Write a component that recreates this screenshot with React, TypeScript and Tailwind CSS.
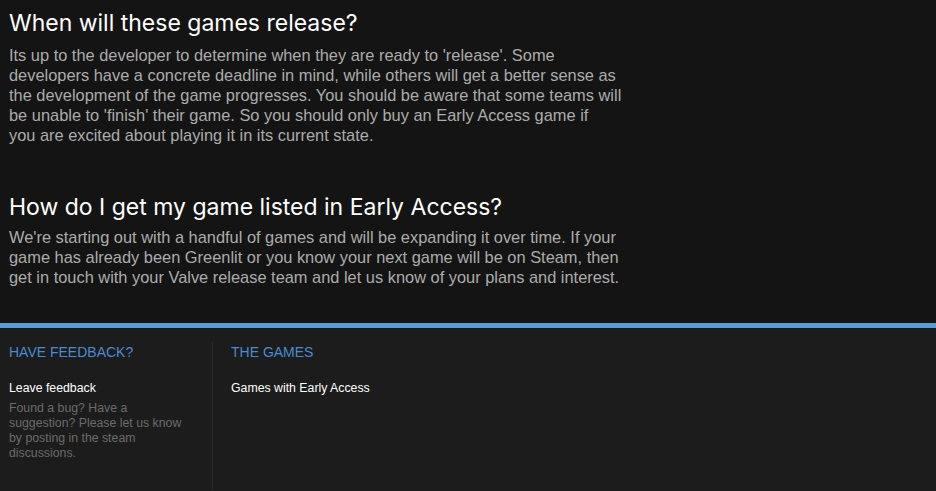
export default function App() {
  return (
    <div className="min-h-[491px] bg-[#1c1c1c] font-['Liberation_Sans',Arial,sans-serif]">
      <div className="bg-[#141414] px-[9px] pt-[8px] pb-[36px]">
        <div className="w-[614px]">
          <h2 className="font-['Inter',sans-serif] text-[23px] leading-[30px] text-white">
            When will these games release?
          </h2>
          <p className="mt-[7px] text-[16.4px] leading-[20px] text-[#acacac]">
            Its up to the developer to determine when they are ready to 'release'. Some developers have a concrete
            deadline in mind, while others will get a better sense as the development of the game progresses. You
            should be aware that some teams will be unable to 'finish' their game. So you should only buy an Early
            Access game if
            <br />
            you are excited about playing it in its current state.
          </p>
          <h2 className="mt-[47px] font-['Inter',sans-serif] text-[23px] leading-[30px] text-white">
            How do I get my game listed in Early Access?
          </h2>
          <p className="mt-[5px] text-[16.4px] leading-[20px] text-[#acacac]">
            We're starting out with a handful of games and will be expanding it over time. If your game has already
            been Greenlit or you know your next game will be on Steam, then get in touch with your Valve release team
            and let us know of your plans and interest.
          </p>
        </div>
      </div>
      <div className="h-[5px] bg-[#5a9bd5]" />
      <div className="h-px bg-[#0f1a24]" />
      <div className="flex pt-[13px]">
        <div className="w-[212px] px-[9px]">
          <h3 className="text-[14px] uppercase text-[#4c8ad2]">Have feedback?</h3>
          <div className="mt-[16px] text-[12.3px] text-white">Leave feedback</div>
          <p className="mt-[4px] w-[182px] text-[12.3px] leading-[15px] text-[#6b6b6b]">
            Found a bug? Have a suggestion? Please let us know by posting in the steam discussions.
          </p>
        </div>
        <div className="min-h-[148px] border-l border-[#2b2b2b] px-[18px]">
          <h3 className="text-[14px] uppercase text-[#4c8ad2]">The games</h3>
          <div className="mt-[16px] text-[12.3px] text-white">Games with Early Access</div>
        </div>
      </div>
    </div>
  );
}
